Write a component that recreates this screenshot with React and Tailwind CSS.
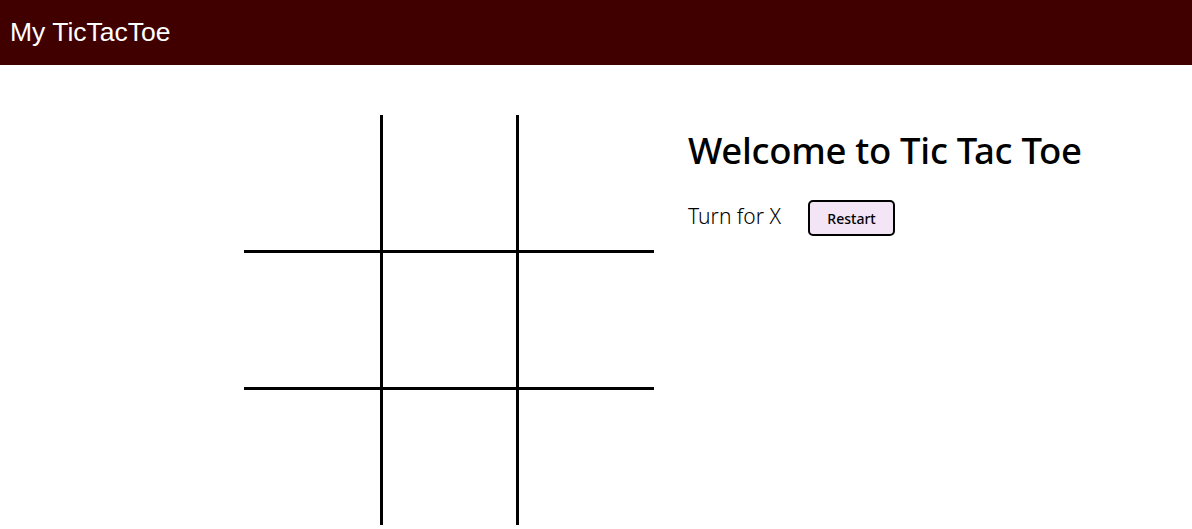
import React from "react";

export default function App() {
  const cols = ["w-[139px] border-r-[3px]", "w-[136px] border-r-[3px]", "w-[135px]"];
  const rows = ["h-[138px] border-b-[3px]", "h-[137px] border-b-[3px]", "h-[135px]"];
  return (
    <div className="min-h-screen bg-white">
      <header className="h-[65px] bg-[#400000] flex items-center px-[10px]">
        <h1 className="text-white text-[26.5px] leading-none font-['Liberation_Sans',Arial,sans-serif] -mt-[1px]">
          My TicTacToe
        </h1>
      </header>
      <main className="flex pt-[50px] pl-[244px] gap-[34px]">
        <div className="grid grid-cols-[139px_136px_135px]">
          {rows.map((r, ri) =>
            cols.map((c, ci) => (
              <button
                key={`${ri}-${ci}`}
                className={`box-border border-black border-solid ${r} ${c}`}
              />
            ))
          )}
        </div>
        <div className="pt-[13px] font-['Noto_Sans',sans-serif] text-black">
          <h2 className="text-[36.5px] font-medium leading-[44px] tracking-[-0.3px]">
            Welcome to Tic Tac Toe
          </h2>
          <div className="flex items-center mt-[28px]">
            <span className="text-[21px] font-light -mt-[3px]">Turn for X</span>
            <button className="ml-[27px] w-[87px] h-[36px] bg-[#f3e5f5] border-2 border-black rounded-[5px] text-[14px] font-medium">
              Restart
            </button>
          </div>
        </div>
      </main>
    </div>
  );
}
